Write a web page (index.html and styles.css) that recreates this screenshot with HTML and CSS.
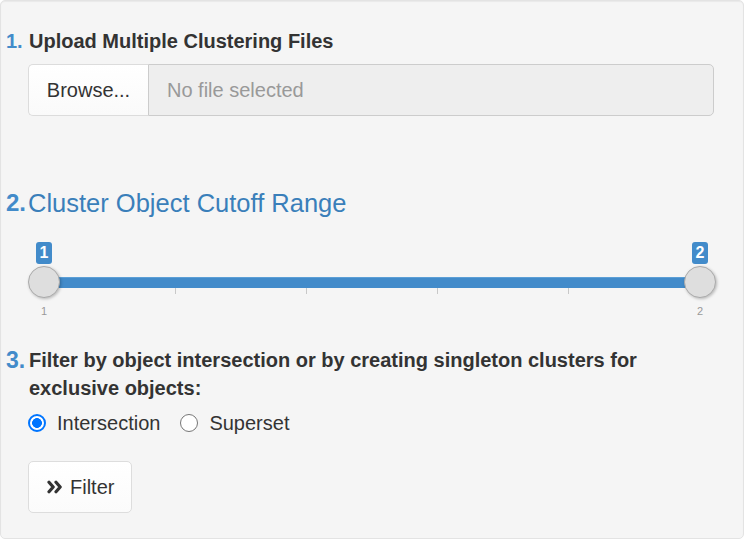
FILE: index.html
```html
<!DOCTYPE html>
<html>
<head>
<meta charset="utf-8">
<link rel="stylesheet" href="styles.css">
</head>
<body>
<div class="panel">
  <section class="step step-upload">
    <span class="num num-1">1.</span>
    <div class="content">
      <div class="label">Upload Multiple Clustering Files</div>
      <div class="file-input">
        <span class="browse">Browse...</span>
        <span class="file-name">No file selected</span>
      </div>
    </div>
  </section>

  <section class="step step-range">
    <span class="num num-2">2.</span>
    <div class="content">
      <h4 class="heading">Cluster Object Cutoff Range</h4>
      <div class="slider">
        <div class="track">
          <div class="bar"></div>
          <div class="ticks">
            <span class="tick tick-end"></span>
            <span class="tick"></span>
            <span class="tick"></span>
            <span class="tick"></span>
            <span class="tick"></span>
            <span class="tick tick-end"></span>
          </div>
          <div class="grid-labels">
            <span>1</span>
            <span>2</span>
          </div>
          <div class="handle handle-from"><span class="bubble">1</span></div>
          <div class="handle handle-to"><span class="bubble">2</span></div>
        </div>
      </div>
    </div>
  </section>

  <section class="step step-filter">
    <span class="num num-3">3.</span>
    <div class="content">
      <div class="label">Filter by object intersection or by creating singleton clusters for exclusive objects:</div>
      <div class="radios">
        <label class="radio"><span class="dot checked"></span>Intersection</label>
        <label class="radio"><span class="dot"></span>Superset</label>
      </div>
      <button class="btn">
        <svg class="icon" viewBox="0 0 16 14" width="16" height="14" aria-hidden="true">
          <path d="M2 2.2 L6.2 7 L2 11.8" fill="none" stroke="#333" stroke-width="3.2" stroke-linejoin="round" stroke-linecap="round"/>
          <path d="M9 2.2 L13.2 7 L9 11.8" fill="none" stroke="#333" stroke-width="3.2" stroke-linejoin="round" stroke-linecap="round"/>
        </svg>
        <span>Filter</span>
      </button>
    </div>
  </section>
</div>
</body>
</html>
```

FILE: styles.css
```css
html, body {
  margin: 0;
  padding: 0;
  background: #ffffff;
}

body {
  font-family: "Liberation Sans", Arial, sans-serif;
  color: #333333;
  font-size: 20px;
}

.panel {
  box-sizing: border-box;
  width: 744px;
  height: 539px;
  background: #f5f5f5;
  border: 1px solid #e3e3e3;
  border-radius: 5px;
  box-shadow: inset 0 1px 1px rgba(0, 0, 0, 0.05);
  padding: 26px 27px 0 4px;
}

.step {
  display: grid;
  grid-template-columns: 23px 1fr;
  align-items: start;
}

.num {
  color: #428bca;
  line-height: 28px;
}

.num-1 {
  font-size: 20px;
  font-weight: bold;
  margin-left: 1px;
}

.num-2 {
  font-size: 24px;
  font-weight: bold;
  line-height: 36px;
  margin-left: 1px;
}

.num-3 {
  font-size: 23px;
  font-weight: bold;
  margin-left: 1px;
}

.label {
  font-weight: bold;
  line-height: 28px;
  padding-left: 1px;
}

.file-input {
  display: flex;
  margin-top: 9px;
  height: 52px;
  width: 686px;
  box-sizing: border-box;
}

.browse {
  box-sizing: border-box;
  width: 120px;
  display: flex;
  align-items: center;
  justify-content: center;
  background: linear-gradient(#ffffff, #fafafa);
  border: 1px solid #dcdcdc;
  border-right: none;
  border-radius: 5px 0 0 5px;
  color: #333;
}

.file-name {
  flex: 1;
  display: flex;
  align-items: center;
  padding-left: 18px;
  background: #eeeeee;
  border: 1px solid #cccccc;
  border-radius: 0 5px 5px 0;
  color: #999999;
}

.step-range {
  margin-top: 69px;
}

.heading {
  margin: 0;
  font-size: 25.5px;
  font-weight: normal;
  color: #3a7fba;
  line-height: 36px;
}

.slider {
  margin-top: 22px;
  height: 90px;
}

.track {
  position: relative;
  height: 100%;
  margin: 0 16px;
}

.bar {
  position: absolute;
  left: 0;
  right: 0;
  top: 34px;
  height: 11px;
  background: #428bca;
  border-top: 1px solid #5c9fd6;
  box-sizing: border-box;
}

.ticks {
  position: absolute;
  left: 0;
  right: 0;
  top: 45px;
  display: flex;
  justify-content: space-between;
}

.tick {
  width: 1px;
  height: 6px;
  background: #c8c8c8;
}

.tick-end {
  background: #7fb0dc;
  height: 10px;
}

.grid-labels {
  position: absolute;
  left: -10px;
  right: -10px;
  top: 62px;
  display: flex;
  justify-content: space-between;
  font-size: 11px;
  color: #999999;
}

.grid-labels span {
  width: 20px;
  text-align: center;
}

.handle {
  position: absolute;
  top: 23px;
  width: 32px;
  height: 32px;
  margin-left: -16px;
  box-sizing: border-box;
  border-radius: 50%;
  background: #dedede;
  border: 1px solid #ababab;
  box-shadow: 1px 1px 3px rgba(0, 0, 0, 0.25);
}

.handle-from {
  left: 0;
}

.handle-to {
  left: 100%;
}

.bubble {
  position: absolute;
  left: 50%;
  top: -25px;
  transform: translateX(-50%);
  min-width: 16px;
  height: 22px;
  padding: 0 1px;
  box-sizing: border-box;
  background: #428bca;
  color: #ffffff;
  font-weight: bold;
  font-size: 16px;
  line-height: 22px;
  text-align: center;
  border-radius: 3px;
}

.step-filter {
  margin-top: 13px;
}

.radios {
  display: flex;
  gap: 20px;
  margin-top: 6px;
  line-height: 30px;
}

.radio {
  display: flex;
  align-items: center;
  gap: 11px;
}

.dot {
  box-sizing: border-box;
  width: 18px;
  height: 18px;
  border-radius: 50%;
  border: 1.5px solid #767676;
  background: #ffffff;
}

.dot.checked {
  border: 2px solid #0075ff;
  background: radial-gradient(circle, #0075ff 0 4.6px, #ffffff 5.2px);
}

.btn {
  display: flex;
  align-items: center;
  gap: 7px;
  margin-top: 23px;
  height: 52px;
  width: 104px;
  box-sizing: border-box;
  padding: 0 0 0 18px;
  font-family: inherit;
  font-size: 20px;
  color: #333333;
  background: linear-gradient(#ffffff, #fbfbfb);
  border: 1px solid #dddddd;
  border-radius: 5px;
}

.icon {
  display: block;
}
```
